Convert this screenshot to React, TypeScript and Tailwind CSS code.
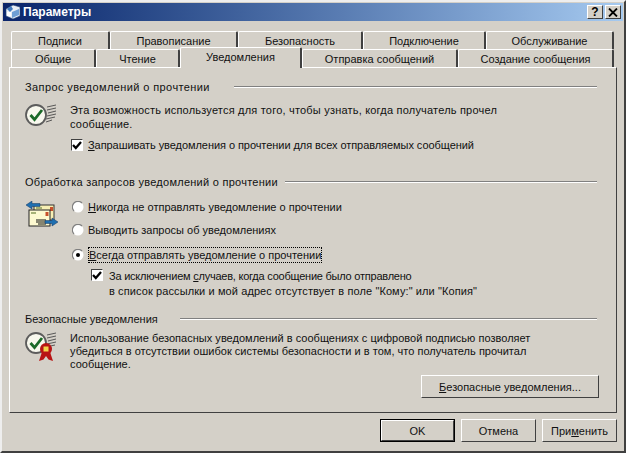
import type { ReactNode } from 'react';

const raised = 'border border-t-white border-l-white border-r-[#404040] border-b-[#404040]';

function CaptionButton({ children }: { children: ReactNode }) {
  return (
    <div className={`flex h-[14px] w-[16px] items-center justify-center bg-[#d4d0c8] text-[12px] font-bold leading-none text-black ${raised}`}>
      {children}
    </div>
  );
}

function Tab({ label, width, active = false }: { label: string; width: number; active?: boolean }) {
  const widthStyle = { width };
  if (active) {
    return (
      <div
        style={widthStyle}
        className="relative z-10 -mb-px -mt-[2px] flex h-[21px] items-start justify-center rounded-t-[2px] border-l border-r-2 border-t border-l-white border-r-[#404040] border-t-white bg-[#d4d0c8] pt-[2px]"
      >
        {label}
      </div>
    );
  }
  return (
    <div
      style={widthStyle}
      className="flex h-[18px] items-center justify-center rounded-t-[2px] border-l border-r-2 border-t border-l-white border-r-[#404040] border-t-white bg-[#d4d0c8]"
    >
      {label}
    </div>
  );
}

function Heading({ title, className }: { title: string; className: string }) {
  return (
    <div className="flex h-[14px] items-center">
      <span className={`whitespace-nowrap ${className}`}>{title}</span>
      <div className="h-[2px] flex-1 border-b border-t border-b-white border-t-[#808080]" />
    </div>
  );
}

function Checkbox() {
  return (
    <div className="flex h-[12px] w-[12px] shrink-0 items-center justify-center border border-b-white border-l-[#404040] border-r-white border-t-[#404040] bg-white">
      <svg width="10" height="9" viewBox="0 0 10 9">
        <path d="M1 4 L3.8 7 L9 1" fill="none" stroke="#000" strokeWidth="2.3" />
      </svg>
    </div>
  );
}

function Radio({ checked = false }: { checked?: boolean }) {
  return (
    <svg width="12" height="12" viewBox="0 0 12 12" className="shrink-0">
      <circle cx="6" cy="6" r="5.5" fill="#fff" />
      <path d="M2 10 A5.5 5.5 0 0 1 10 2" fill="none" stroke="#808080" strokeWidth="1.2" />
      {checked && <circle cx="6" cy="6" r="2" fill="#000" />}
    </svg>
  );
}

function Lines({ x, y }: { x: number; y: number }) {
  return (
    <g stroke="#4a4a4a" strokeWidth="0.9" fill="none">
      <path d={`M${x + 1} ${y + 2} L${x + 10} ${y}`} />
      <path d={`M${x + 1} ${y + 5} L${x + 10} ${y + 3}`} />
      <path d={`M${x + 2} ${y + 8} L${x + 10} ${y + 6}`} />
      <path d={`M${x + 1} ${y + 11} L${x + 10} ${y + 9}`} />
      <path d={`M${x} ${y + 14} L${x + 9} ${y + 12}`} />
      <path d={`M${x} ${y + 17} L${x + 6} ${y + 15}`} />
    </g>
  );
}

function ReceiptIcon() {
  return (
    <svg width="34" height="24" viewBox="0 0 34 24" className="shrink-0">
      <Lines x={21} y={2} />
      <circle cx="11" cy="12" r="10" fill="#f8f8ee" stroke="#5c5c5c" strokeWidth="1.8" />
      <path d="M5.5 12 L9.5 16.5 L17 7" fill="none" stroke="#1b6a28" strokeWidth="2.8" />
    </svg>
  );
}

function EnvelopesIcon() {
  return (
    <svg width="34" height="30" viewBox="0 0 34 30" className="shrink-0">
      <rect x="9" y="4" width="20" height="15" fill="#f7efb4" stroke="#333" />
      <rect x="25" y="6" width="3" height="4" fill="#c8502a" />
      <path d="M11 7 H17" stroke="#8a9a5a" strokeWidth="1.5" />
      <rect x="4" y="9" width="21" height="16" fill="#fdf9d0" stroke="#222" />
      <path d="M6 12 H11" stroke="#8a9a5a" strokeWidth="1.5" />
      <path d="M11 19 H21 M11 21 H21 M13 23 H21" stroke="#111" strokeWidth="1" />
      <rect x="20.5" y="11" width="3" height="4" fill="#c8502a" />
      <path d="M1 4 L7 0 V2.5 H15 V5.5 H7 V8 Z" fill="#1f6fb0" stroke="#12355e" strokeWidth="0.5" />
      <path d="M33 21 L27 17 V19.5 H20 V22.5 H27 V25 Z" fill="#1f6fb0" stroke="#12355e" strokeWidth="0.5" />
    </svg>
  );
}

function SecureIcon() {
  return (
    <svg width="34" height="32" viewBox="0 0 34 32" className="shrink-0">
      <Lines x={21} y={1} />
      <circle cx="11" cy="11" r="10" fill="#f8f8ee" stroke="#5c5c5c" strokeWidth="1.8" />
      <path d="M5.5 11 L9.5 15.5 L17 6" fill="none" stroke="#1b6a28" strokeWidth="2.8" />
      <path d="M17 20 L14 29 L18.5 27.5 L21 24 L23.5 27.5 L28 29 L25 20 Z" fill="#b81414" />
      <circle cx="21" cy="17" r="6" fill="#b81414" />
      <rect x="18.5" y="14.5" width="5" height="5" fill="#f2d44a" />
    </svg>
  );
}

function DialogButton({ children, isDefault = false }: { children: ReactNode; isDefault?: boolean }) {
  return (
    <div className={isDefault ? 'border border-black' : ''}>
      <div className={`flex items-center justify-center bg-[#d4d0c8] ${raised} ${isDefault ? 'h-[21px] w-[73px]' : 'h-[23px] w-[75px]'}`}>
        {children}
      </div>
    </div>
  );
}

export default function App() {
  return (
    <div className="h-[453px] w-[626px] overflow-hidden border-2 border-b-[#404040] border-l-[#eeeeee] border-r-[#404040] border-t-[#eeeeee] bg-[#d4d0c8] text-[11px] leading-[14px] text-[#111] [font-family:'Liberation_Sans',sans-serif]">
      {/* Title bar */}
      <div className="mx-px mt-px flex h-[18px] items-center justify-between bg-gradient-to-r from-[#0a246a] to-[#a6caf0] pl-[2px] pr-[2px]">
        <div className="flex items-center gap-[2px] text-[12px] font-bold text-white">
          <svg width="16" height="16" viewBox="0 0 16 16">
            <path d="M1 5 L8 1 L15 3 V12 L8 15 L1 12 Z" fill="#e8eef6" stroke="#20406e" strokeWidth="0.6" />
            <path d="M2 5 L6 2 L8 5 L5 8 Z" fill="#3f78bc" />
            <path d="M7 8 L14 5 V11 L7 14 Z" fill="#6f9fd4" />
            <path d="M2 8 H6 V12 H2 Z" fill="#ffffff" />
          </svg>
          Параметры
        </div>
        <div className="flex gap-[2px]">
          <CaptionButton>?</CaptionButton>
          <CaptionButton>
            <svg width="10" height="9" viewBox="0 0 10 9">
              <path d="M1 0.5 L9 8.5 M9 0.5 L1 8.5" stroke="#000" strokeWidth="1.8" fill="none" />
            </svg>
          </CaptionButton>
        </div>
      </div>

      {/* Tabs */}
      <div className="mt-[10px] flex flex-col pl-[7px]">
        <div className="flex pl-[2px]">
          <Tab label="Подписи" width={99} />
          <Tab label="Правописание" width={128} />
          <Tab label="Безопасность" width={125} />
          <Tab label="Подключение" width={123} />
          <Tab label="Обслуживание" width={128} />
        </div>
        <div className="flex pl-[2px]">
          <Tab label="Общие" width={85} />
          <Tab label="Чтение" width={84} />
          <Tab label="Уведомления" width={122} active />
          <Tab label="Отправка сообщений" width={156} />
          <Tab label="Создание сообщения" width={156} />
        </div>
      </div>

      {/* Panel */}
      <div className="ml-[7px] h-[346px] w-[608px] border border-b-[#404040] border-l-white border-r-[#404040] border-t-white pl-[15px] pr-[19px] pt-[12px]">
        <Heading title="Запрос уведомлений о прочтении" className="mr-[24px] tracking-[0.4px]" />
        <div className="mt-[9px] flex">
          <ReceiptIcon />
          <div className="ml-[11px]">
            <p className="tracking-[0.2px]">
              Эта возможность используется для того, чтобы узнать, когда получатель прочел
              <br />
              сообщение.
            </p>
            <div className="ml-[1px] mt-[7px] flex items-center gap-[5px]">
              <Checkbox />
              <span className="tracking-[-0.06px]">
                <u>З</u>апрашивать уведомления о прочтении для всех отправляемых сообщений
              </span>
            </div>
          </div>
        </div>

        <div className="mt-[23px]">
          <Heading title="Обработка запросов уведомлений о прочтении" className="mr-[7px] tracking-[0.26px]" />
        </div>
        <div className="mt-[10px] flex">
          <div className="mt-[2px]">
            <EnvelopesIcon />
          </div>
          <div className="ml-[13px]">
            <div className="flex h-[16px] items-center gap-[4px]">
              <Radio />
              <span>
                <u>Н</u>икогда не отправлять уведомление о прочтении
              </span>
            </div>
            <div className="mt-[7px] flex h-[16px] items-center gap-[4px]">
              <Radio />
              <span>Выводить запросы об уведомлениях</span>
            </div>
            <div className="mt-[9px] flex h-[16px] items-center gap-[4px]">
              <Radio checked />
              <span className="border border-dotted border-black">
                <u>В</u>сегда отправлять уведомление о прочтении
              </span>
            </div>
            <div className="ml-[19px] mt-[6px] flex items-start gap-[6px]">
              <Checkbox />
              <span className="leading-[15px]">
                <span className="tracking-[-0.23px]">
                  За исключением <u>с</u>лучаев, когда сообщение было отправлено
                </span>
                <br />
                <span className="tracking-[0.1px]">в список рассылки и мой адрес отсутствует в поле "Кому:" или "Копия"</span>
              </span>
            </div>
          </div>
        </div>

        <div className="mt-[13px]">
          <Heading title="Безопасные уведомления" className="mr-[22px]" />
        </div>
        <div className="mt-[6px] flex">
          <SecureIcon />
          <p className="ml-[11px] leading-[13px] tracking-[0.02px]">
            Использование безопасных уведомлений в сообщениях с цифровой подписью позволяет
            <br />
            убедиться в отсутствии ошибок системы безопасности и в том, что получатель прочитал
            <br />
            сообщение.
          </p>
        </div>
        <div className="-mr-[2px] mt-[4px] flex justify-end">
          <div className={`flex h-[23px] w-[178px] items-center justify-center ${raised}`}>
            <span>
              <u>Б</u>езопасные уведомления...
            </span>
          </div>
        </div>
      </div>

      {/* Footer buttons */}
      <div className="mr-[7px] mt-[6px] flex justify-end gap-[6px]">
        <DialogButton isDefault>OK</DialogButton>
        <DialogButton>Отмена</DialogButton>
        <DialogButton>
          <span>
            При<u>м</u>енить
          </span>
        </DialogButton>
      </div>
    </div>
  );
}
